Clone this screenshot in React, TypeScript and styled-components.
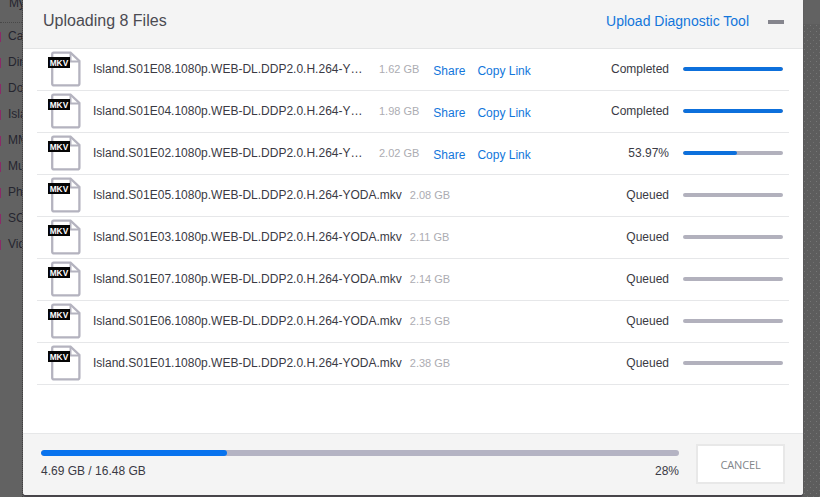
import React from 'react';
import styled, { createGlobalStyle } from 'styled-components';

interface UploadFile {
  name: string;
  size: string;
  status: string;
  progress: number;
  shared?: boolean;
}

const files: UploadFile[] = [
  { name: 'Island.S01E08.1080p.WEB-DL.DDP2.0.H.264-YODA.mkv', size: '1.62 GB', status: 'Completed', progress: 100, shared: true },
  { name: 'Island.S01E04.1080p.WEB-DL.DDP2.0.H.264-YODA.mkv', size: '1.98 GB', status: 'Completed', progress: 100, shared: true },
  { name: 'Island.S01E02.1080p.WEB-DL.DDP2.0.H.264-YODA.mkv', size: '2.02 GB', status: '53.97%', progress: 53.97, shared: true },
  { name: 'Island.S01E05.1080p.WEB-DL.DDP2.0.H.264-YODA.mkv', size: '2.08 GB', status: 'Queued', progress: 0 },
  { name: 'Island.S01E03.1080p.WEB-DL.DDP2.0.H.264-YODA.mkv', size: '2.11 GB', status: 'Queued', progress: 0 },
  { name: 'Island.S01E07.1080p.WEB-DL.DDP2.0.H.264-YODA.mkv', size: '2.14 GB', status: 'Queued', progress: 0 },
  { name: 'Island.S01E06.1080p.WEB-DL.DDP2.0.H.264-YODA.mkv', size: '2.15 GB', status: 'Queued', progress: 0 },
  { name: 'Island.S01E01.1080p.WEB-DL.DDP2.0.H.264-YODA.mkv', size: '2.38 GB', status: 'Queued', progress: 0 },
];

const folders = ['Ca', 'Dir', 'Do', 'Isla', 'MM', 'Mu', 'Ph', 'SC', 'Vid'];

const GlobalStyle = createGlobalStyle`
  * {
    box-sizing: border-box;
  }

  body {
    margin: 0;
    overflow: hidden;
    font-family: 'Liberation Sans', Arial, sans-serif;
    font-size: 12px;
    color: #3a3a44;
  }
`;

const Page = styled.div`
  position: relative;
  display: flex;
  justify-content: space-between;
  height: 497px;
  overflow: hidden;
  background: #626262;
`;

const Sidebar = styled.nav`
  width: 23px;
  border-right: 1px dotted #414141;
  overflow: hidden;
  color: #25252f;
  white-space: nowrap;
`;

const SidebarTitle = styled.div`
  height: 23px;
  padding-left: 9px;
  border-bottom: 1px dotted #484848;
  line-height: 7px;
`;

const Folder = styled.div`
  display: flex;
  align-items: center;
  gap: 7px;
  height: 26px;
  padding-bottom: 1px;

  &::before {
    content: '';
    flex: none;
    width: 1px;
    height: 10px;
    margin-top: 3px;
    background: #8a2b68;
  }
`;

const Texture = styled.div`
  width: 17px;
  margin-top: 24px;
  background-color: #5d5d5d;
  background-image: radial-gradient(circle at 1.5px 1.5px, #767676 0.6px, transparent 0.9px),
    radial-gradient(circle at 4.5px 4.5px, #707070 0.6px, transparent 0.9px);
  background-size: 6px 6px;
`;

const Modal = styled.section`
  position: absolute;
  left: 23px;
  top: 0;
  display: flex;
  flex-direction: column;
  width: 780px;
  height: 495px;
  border-radius: 0 0 3px 3px;
  background: #fff;
  box-shadow: 0 2px 1px #464449;
  overflow: hidden;
`;

const Header = styled.header`
  display: flex;
  align-items: center;
  height: 49px;
  padding: 0 19px 7px 20px;
  border-bottom: 1px solid #e4e5e6;
  background: #f4f4f4;
`;

const Title = styled.h1`
  margin: 0 auto 0 0;
  font-size: 16px;
  font-weight: 400;
  line-height: 20px;
  color: #4b4b52;
`;

const DiagnosticLink = styled.a`
  font-size: 14px;
  line-height: 20px;
  color: #1276db;
`;

const Minimize = styled.button`
  width: 16px;
  height: 4px;
  margin: 3px 0 0 19px;
  padding: 0;
  border: 0;
  background: #85858d;
`;

const List = styled.ul`
  flex: 1;
  margin: 0;
  padding: 0 14px;
  list-style: none;
`;

const Row = styled.li`
  display: flex;
  align-items: center;
  height: 42px;
  padding: 0 6px 2px 11px;
  border-bottom: 1px solid #e6e7e9;
`;

const IconWrap = styled.svg`
  flex: none;
  width: 34px;
  height: 36px;
`;

const FileName = styled.span<{ $clipped?: boolean }>`
  width: ${(p) => (p.$clipped ? '270px' : 'auto')};
  margin-left: 11px;
  overflow: hidden;
  text-overflow: ellipsis;
  white-space: nowrap;
  line-height: 16px;
`;

const FileSize = styled.span<{ $wide?: boolean }>`
  margin-left: ${(p) => (p.$wide ? '16px' : '8px')};
  font-size: 11px;
  line-height: 14px;
  white-space: nowrap;
  color: #acacb2;
`;

const RowLink = styled.a`
  margin: 4px 0 0 14px;
  line-height: 16px;
  white-space: nowrap;
  color: #1276db;

  & + & {
    margin-left: 12px;
  }
`;

const Status = styled.span`
  margin-left: auto;
  margin-right: 14px;
  line-height: 16px;
`;

const Track = styled.div<{ $large?: boolean }>`
  flex: none;
  width: ${(p) => (p.$large ? '638px' : '100px')};
  height: ${(p) => (p.$large ? '6px' : '4px')};
  border-radius: 3px;
  background: ${(p) => (p.$large ? '#b4b3c3' : '#b2b1bd')};
  overflow: hidden;
`;

const Fill = styled.div<{ $large?: boolean }>`
  height: 100%;
  border-radius: 3px;
  background: ${(p) => (p.$large ? '#0873ee' : '#0d70dc')};
`;

const Footer = styled.footer`
  display: flex;
  height: 62px;
  padding: 0 18px;
  border-top: 1px solid #e6e7e8;
  background: #f4f4f4;
`;

const Total = styled.div`
  padding-top: 16px;
`;

const TotalLabels = styled.div`
  display: flex;
  justify-content: space-between;
  margin-top: 7px;
  line-height: 16px;
`;

const CancelButton = styled.button`
  width: 90px;
  height: 40px;
  margin: 10px 0 0 17px;
  padding: 0;
  border: 2px solid #e8e8e8;
  background: #fff;
  font-family: 'Open Sans', sans-serif;
  font-size: 11px;
  letter-spacing: -0.15px;
  color: #81858a;
`;

const MkvIcon = () => (
  <IconWrap viewBox="0 0 34 36" aria-hidden="true">
    <path d="M5.7 1.6H22.5L31.4 10V32.4Q31.4 34.4 29.4 34.4H6.2Q4.2 34.4 4.2 32.4V3.2Q4.2 1.6 5.7 1.6Z" fill="#fff" stroke="#b4b3bf" strokeWidth="2.3" />
    <path d="M22.5 2V10.5H31" fill="none" stroke="#b4b3bf" strokeWidth="2" />
    <rect y="6" width="22" height="11" fill="#050505" />
    <text x="1.7" y="15" textLength="18.5" lengthAdjust="spacingAndGlyphs" fontFamily="Liberation Sans, Arial, sans-serif" fontSize="9" fontWeight="700" fill="#fff">
      MKV
    </text>
  </IconWrap>
);

const FileRow = ({ file }: { file: UploadFile }) => (
  <Row>
    <MkvIcon />
    <FileName $clipped={file.shared}>{file.name}</FileName>
    <FileSize $wide={file.shared}>{file.size}</FileSize>
    {file.shared && (
      <>
        <RowLink>Share</RowLink>
        <RowLink>Copy Link</RowLink>
      </>
    )}
    <Status>{file.status}</Status>
    <Track>
      <Fill style={{ width: `${file.progress}%` }} />
    </Track>
  </Row>
);

const App = () => (
  <>
    <GlobalStyle />
    <Page>
      <Sidebar>
        <SidebarTitle>My</SidebarTitle>
        {folders.map((folder) => (
          <Folder key={folder}>{folder}</Folder>
        ))}
      </Sidebar>
      <Texture />
      <Modal>
        <Header>
          <Title>Uploading 8 Files</Title>
          <DiagnosticLink>Upload Diagnostic Tool</DiagnosticLink>
          <Minimize aria-label="Minimize" />
        </Header>
        <List>
          {files.map((file) => (
            <FileRow key={file.name} file={file} />
          ))}
        </List>
        <Footer>
          <Total>
            <Track $large>
              <Fill $large style={{ width: `${(4.69 / 16.48) * 100 + 0.7}%` }} />
            </Track>
            <TotalLabels>
              <span>4.69 GB / 16.48 GB</span>
              <span>28%</span>
            </TotalLabels>
          </Total>
          <CancelButton>CANCEL</CancelButton>
        </Footer>
      </Modal>
    </Page>
  </>
);

export default App;
